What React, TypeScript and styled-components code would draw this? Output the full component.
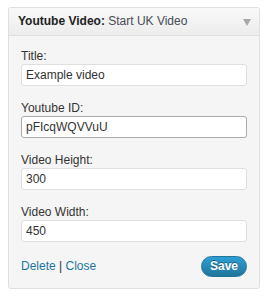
import * as React from 'react';
import styled, { createGlobalStyle } from 'styled-components';

const GlobalStyle = createGlobalStyle`
  html, body {
    margin: 0;
    padding: 0;
    background: #ffffff;
  }
  body {
    font-family: 'Liberation Sans', Arial, sans-serif;
    font-size: 12px;
    color: #333333;
  }
`;

const Page = styled.div`
  padding: 7px 8px;
`;

const Widget = styled.div`
  width: 252px;
  box-sizing: border-box;
  border: 1px solid #dfdfdf;
  border-radius: 3px;
  background: #f5f5f5;
  overflow: hidden;
`;

const Header = styled.div`
  display: flex;
  align-items: center;
  height: 27px;
  padding: 0 8px 0 9px;
  background: linear-gradient(to bottom, #f9f9f9, #ececec);
  border-bottom: 1px solid #dfdfdf;
  font-size: 12px;
  line-height: 27px;
`;

const HeaderTitle = styled.div`
  flex: 1;
  color: #464b55;
  white-space: nowrap;
  overflow: hidden;
`;

const Strong = styled.strong`
  color: #222222;
  font-weight: bold;
`;

const Toggle = styled.svg`
  width: 8px;
  height: 7px;
  margin-top: 1px;
  fill: #a8a8a8;
`;

const Body = styled.div`
  padding: 12px 12px 11px;
`;

const Field = styled.div`
  margin-bottom: 14px;
`;

const Label = styled.label`
  display: block;
  font-size: 12px;
  line-height: 16px;
  color: #333333;
`;

const Input = styled.input<{ focused?: boolean }>`
  display: block;
  width: 100%;
  height: 22px;
  box-sizing: border-box;
  margin: 0;
  padding: 0 4px;
  border: 1px solid ${props => (props.focused ? '#aaaaaa' : '#dfdfdf')};
  border-radius: 3px;
  background: #ffffff;
  font-family: 'Liberation Sans', Arial, sans-serif;
  font-size: 12px;
  color: #333333;
  outline: none;
`;

const Footer = styled.div`
  display: flex;
  align-items: baseline;
  justify-content: space-between;
`;

const Links = styled.div`
  font-size: 12px;
  color: #333333;
`;

const Link = styled.a`
  color: #21759b;
  text-decoration: none;
  cursor: pointer;
`;

const SaveButton = styled.button`
  width: 46px;
  height: 21px;
  padding: 0;
  border: 1px solid #21759b;
  border-radius: 11px;
  background: linear-gradient(to bottom, #2e9fd2, #21759b);
  color: #ffffff;
  font-family: 'Liberation Sans', Arial, sans-serif;
  font-size: 12px;
  font-weight: bold;
  line-height: 19px;
  text-shadow: 0 -1px 0 rgba(0, 0, 0, 0.4);
  cursor: pointer;
`;

const fields = [
  { label: 'Title:', value: 'Example video' },
  { label: 'Youtube ID:', value: 'pFIcqWQVVuU', focused: true },
  { label: 'Video Height:', value: '300' },
  { label: 'Video Width:', value: '450' },
];

export default function App() {
  return (
    <>
      <GlobalStyle />
      <Page>
        <Widget>
          <Header>
            <HeaderTitle>
              <Strong>Youtube Video:</Strong> Start UK Video
            </HeaderTitle>
            <Toggle viewBox="0 0 8 7">
              <polygon points="0,0 8,0 4,7" />
            </Toggle>
          </Header>
          <Body>
            {fields.map(f => (
              <Field key={f.label}>
                <Label>{f.label}</Label>
                <Input defaultValue={f.value} focused={f.focused} />
              </Field>
            ))}
            <Footer>
              <Links>
                <Link>Delete</Link> | <Link>Close</Link>
              </Links>
              <SaveButton>Save</SaveButton>
            </Footer>
          </Body>
        </Widget>
      </Page>
    </>
  );
}
